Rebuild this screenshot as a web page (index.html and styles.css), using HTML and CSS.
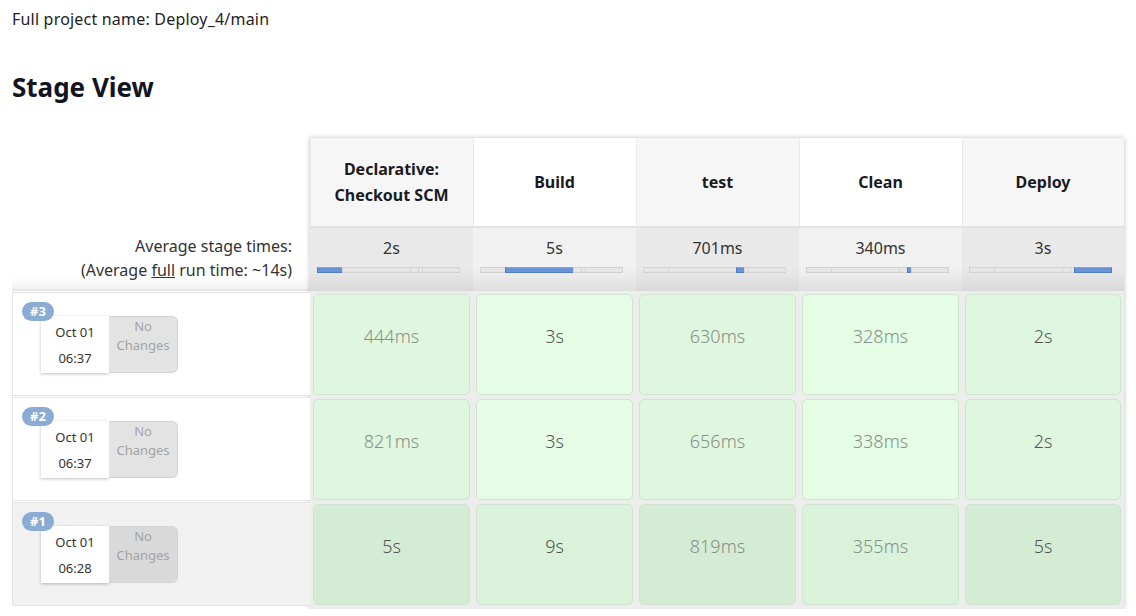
FILE: index.html
```html
<!DOCTYPE html>
<html>
<head>
<meta charset="utf-8">
<link rel="stylesheet" href="styles.css">
</head>
<body>
<p class="project">Full project name: Deploy_4/main</p>
<h2 class="title">Stage View</h2>
<div class="view">
  <div class="left">
    <div class="left-head"></div>
    <div class="left-avg">
      <div>Average stage times:</div>
      <div>(Average <u>full</u> run time: ~14s)</div>
    </div>
    <div class="run">
      <span class="badge">#3</span>
      <div class="run-info">
        <div class="date"><div>Oct 01</div><div>06:37</div></div>
        <div class="changes">No<br>Changes</div>
      </div>
    </div>
    <div class="run">
      <span class="badge">#2</span>
      <div class="run-info">
        <div class="date"><div>Oct 01</div><div>06:37</div></div>
        <div class="changes">No<br>Changes</div>
      </div>
    </div>
    <div class="run run-hl">
      <span class="badge">#1</span>
      <div class="run-info">
        <div class="date"><div>Oct 01</div><div>06:28</div></div>
        <div class="changes">No<br>Changes</div>
      </div>
    </div>
  </div>
  <div class="stages">
    <div class="col col-odd">
      <div class="head">Declarative:<br>Checkout SCM</div>
      <div class="avg"><div class="avg-time">2s</div>
        <div class="bar">
          <span class="seg on" style="width:25px"></span><span class="seg" style="width:68px"></span><span class="seg" style="width:8px"></span><span class="seg" style="width:4px"></span><span class="seg" style="width:38px"></span>
        </div>
      </div>
      <div class="cell"><span class="dur light">444ms</span></div>
      <div class="cell"><span class="dur light">821ms</span></div>
      <div class="cell cell-hl"><span class="dur">5s</span></div>
    </div>
    <div class="col col-even">
      <div class="head">Build</div>
      <div class="avg"><div class="avg-time">5s</div>
        <div class="bar">
          <span class="seg" style="width:25px"></span><span class="seg on" style="width:68px"></span><span class="seg" style="width:8px"></span><span class="seg" style="width:4px"></span><span class="seg" style="width:38px"></span>
        </div>
      </div>
      <div class="cell"><span class="dur">3s</span></div>
      <div class="cell"><span class="dur">3s</span></div>
      <div class="cell cell-hl"><span class="dur">9s</span></div>
    </div>
    <div class="col col-odd">
      <div class="head">test</div>
      <div class="avg"><div class="avg-time">701ms</div>
        <div class="bar">
          <span class="seg" style="width:25px"></span><span class="seg" style="width:68px"></span><span class="seg on" style="width:8px"></span><span class="seg" style="width:4px"></span><span class="seg" style="width:38px"></span>
        </div>
      </div>
      <div class="cell"><span class="dur light">630ms</span></div>
      <div class="cell"><span class="dur light">656ms</span></div>
      <div class="cell cell-hl"><span class="dur light">819ms</span></div>
    </div>
    <div class="col col-even">
      <div class="head">Clean</div>
      <div class="avg"><div class="avg-time">340ms</div>
        <div class="bar">
          <span class="seg" style="width:25px"></span><span class="seg" style="width:68px"></span><span class="seg" style="width:8px"></span><span class="seg on" style="width:4px"></span><span class="seg" style="width:38px"></span>
        </div>
      </div>
      <div class="cell"><span class="dur light">328ms</span></div>
      <div class="cell"><span class="dur light">338ms</span></div>
      <div class="cell cell-hl"><span class="dur light">355ms</span></div>
    </div>
    <div class="col col-odd">
      <div class="head">Deploy</div>
      <div class="avg"><div class="avg-time">3s</div>
        <div class="bar">
          <span class="seg" style="width:25px"></span><span class="seg" style="width:68px"></span><span class="seg" style="width:8px"></span><span class="seg" style="width:4px"></span><span class="seg on" style="width:38px"></span>
        </div>
      </div>
      <div class="cell"><span class="dur">2s</span></div>
      <div class="cell"><span class="dur">2s</span></div>
      <div class="cell cell-hl"><span class="dur">5s</span></div>
    </div>
  </div>
</div>
</body>
</html>
```

FILE: styles.css
```css
html, body {
  margin: 0;
  padding: 0;
  background: #fff;
}
body {
  font-family: "Noto Sans", "Open Sans", sans-serif;
  color: #1a1a1a;
  font-size: 16px;
  padding: 0 0 0 12px;
}
.project {
  margin: 0;
  padding-top: 8px;
  line-height: 22px;
  font-size: 16px;
  letter-spacing: 0.2px;
  color: #222;
}
.title {
  margin: 0;
  padding-top: 39px;
  font-size: 26px;
  line-height: 36px;
  font-weight: 700;
  color: #14141f;
}
.view {
  display: flex;
  margin-top: 33px;
}
.left {
  width: 298px;
  flex: none;
  display: flex;
  flex-direction: column;
}
.left-head {
  height: 88px;
}
.left-avg {
  height: 65px;
  box-sizing: border-box;
  text-align: right;
  padding: 8px 18px 0 0;
  line-height: 24px;
  color: #333;
  background: linear-gradient(#fff 80%, #f3f3f3);
  border-bottom: 2px solid #e6e6e6;
}
.run {
  position: relative;
  height: 104px;
  box-sizing: border-box;
  border: 1px solid #e4e4e4;
  border-right: none;
  margin-top: 1px;
  background: #fff;
}
.run-hl {
  background: #f1f1f1;
}
.badge {
  position: absolute;
  left: 9px;
  top: 9px;
  z-index: 2;
  background: #8aacd4;
  color: #fff;
  font-size: 13px;
  font-weight: 700;
  line-height: 19px;
  padding: 0 8px;
  border-radius: 10px;
}
.run-info {
  display: flex;
  margin: 23px 0 0 28px;
}
.date {
  width: 68px;
  height: 57px;
  background: #fff;
  box-shadow: 0 1px 3px rgba(0,0,0,0.25);
  font-size: 13px;
  color: #333;
  text-align: center;
  display: flex;
  flex-direction: column;
  justify-content: center;
  gap: 6px;
  line-height: 20px;
}
.changes {
  width: 69px;
  height: 57px;
  box-sizing: border-box;
  background: #e3e3e3;
  border: 1px solid #d4d4d4;
  border-left: none;
  border-radius: 0 6px 6px 0;
  font-size: 13px;
  color: #a3a3a3;
  text-align: center;
  line-height: 19px;
  padding-top: 0;
}
.run-hl .changes {
  background: #d9d9d9;
}
.stages {
  display: flex;
  flex: none;
  box-shadow: 0 0 5px rgba(0,0,0,0.25);
  height: 471px;
  background: #eceeec;
}
.col {
  width: 163px;
  display: flex;
  flex-direction: column;
}
.col:last-child {
  width: 162px;
}
.head {
  height: 88px;
  display: flex;
  align-items: center;
  justify-content: center;
  text-align: center;
  font-weight: 700;
  line-height: 26px;
  color: #1a1a22;
  box-shadow: inset 1px 0 0 #ebebeb;
}
.col-odd .head { background: #f6f6f6; }
.col-even .head { background: #fff; }
.avg {
  height: 65px;
  box-sizing: border-box;
  padding-top: 8px;
  border-top: 2px solid #e2e2e2;
}
.col-odd .avg { background: linear-gradient(#e9e9e9 65%, #d9d9d9); }
.col-even .avg { background: linear-gradient(#f1f1f1 65%, #dedede); }
.avg-time {
  text-align: center;
  line-height: 24px;
  color: #333;
}
.bar {
  display: flex;
  margin: 7px 0 0 7px;
  width: 143px;
  height: 6px;
}
.seg {
  box-sizing: border-box;
  height: 6px;
  background: #e6e6e6;
  border: 1px solid #d2d2d2;
  border-right: none;
}
.seg:last-child {
  border-right: 1px solid #d2d2d2;
}
.seg.on {
  background: #6a93d6;
  border-color: #4f7dc8;
  border-top-color: #80a4df;
}
.cell {
  height: 101px;
  margin: 3px 3px 1px 3px;
  box-sizing: border-box;
  border: 1px solid #d3e3d3;
  border-radius: 5px;
  display: flex;
  align-items: center;
  justify-content: center;
}
.col-odd .cell { background: #dff7df; }
.col-even .cell { background: #e5fde5; }
.col-odd .cell-hl { background: #d3ecd3; }
.col-even .cell-hl { background: #d9f2d9; }
.dur {
  font-size: 18px;
  font-weight: 300;
  color: #555;
  margin-bottom: 18px;
}
.dur.light {
  color: #8a8f8a;
}
```
